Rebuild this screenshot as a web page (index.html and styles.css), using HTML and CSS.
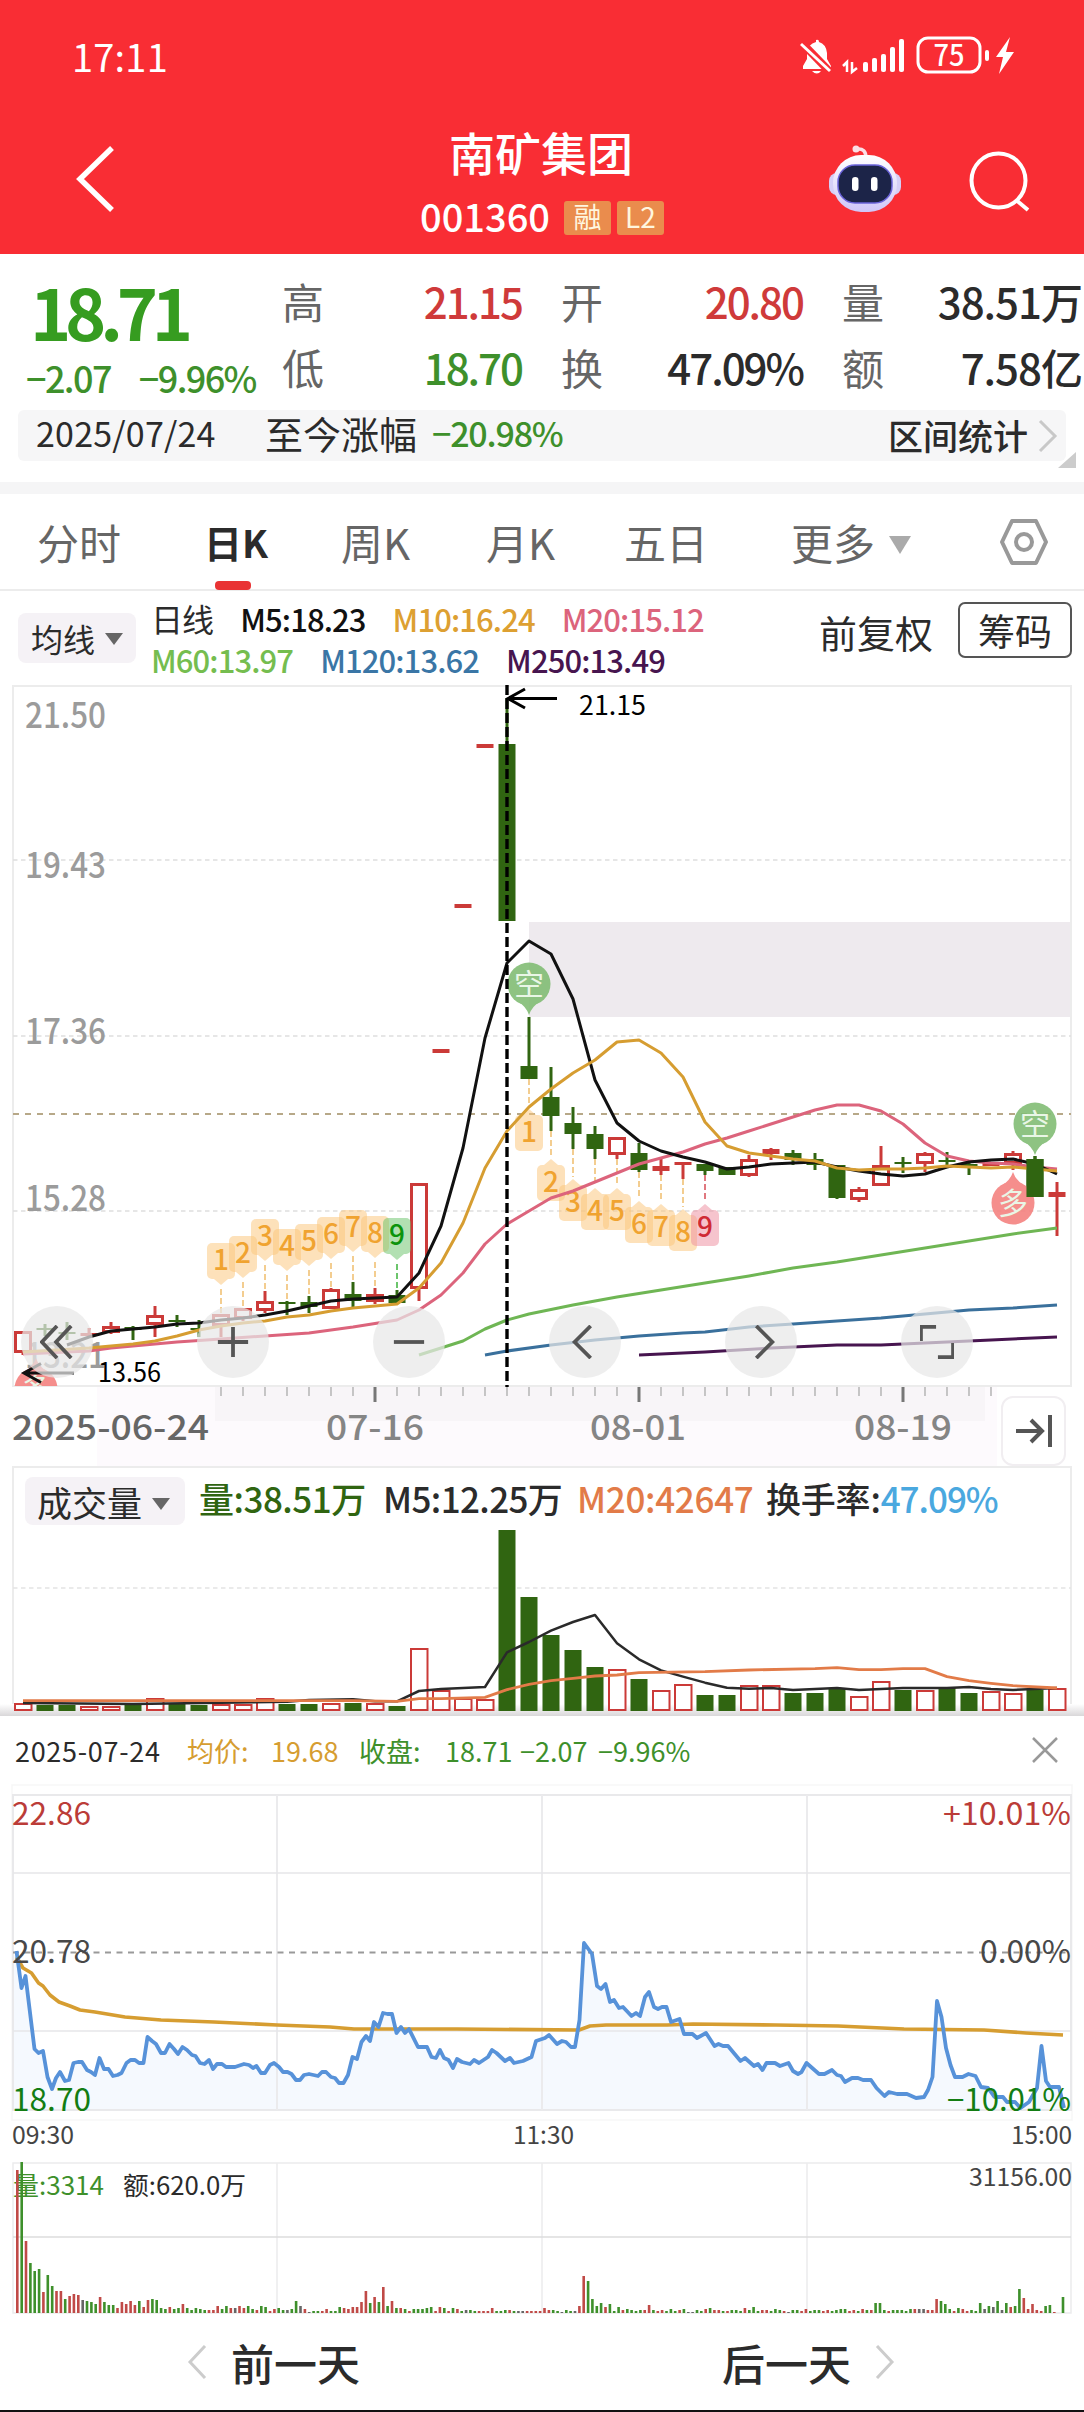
FILE: index.html
```html
<!DOCTYPE html>
<html lang="zh-CN">
<head>
    <meta charset="utf-8">
    <title>南矿集团 001360</title>
    <link rel="stylesheet" href="styles.css">
</head>
<body>
    <header class="top">
        <div class="status">
            <span class="clock">17:11</span>
            <svg class="status-icons" width="220" height="44" viewBox="797 34 220 44">
                <g fill="#fff">
                    <path d="M803 66 L807 59 V53 Q808 44 816 42 L816 40 Q819 39 819 42 Q826 44 827 53 V59 L831 66 V69 H803 Z"/>
                    <path d="M812 71 H821 Q817 76 812 71 Z"/>
                    <rect x="863" y="62" width="5" height="10" rx="2"/>
                    <rect x="872" y="58" width="5" height="14" rx="2"/>
                    <rect x="881" y="54" width="5" height="18" rx="2"/>
                    <rect x="890" y="47" width="5" height="25" rx="2"/>
                    <rect x="899" y="39" width="5" height="33" rx="2"/>
                    <rect x="985" y="50" width="4" height="11" rx="2"/>
                    <path d="M1010 37 L996 57 H1003 L999 74 L1014 52 H1006 Z"/>
                </g>
                <path d="M800 41 L831 73" stroke="#f92d34" stroke-width="8"/>
                <path d="M801 44 L830 71" stroke="#fff" stroke-width="3"/>
                <path d="M843 66 L847 62 V72 M852 62 V72 L857 68" fill="none" stroke="#fff" stroke-width="2.5"/>
                <rect x="918" y="38" width="62" height="34" rx="10" fill="none" stroke="#fff" stroke-width="3"/>
                <text x="949" y="65.500" class="battery" text-anchor="middle" textLength="31" lengthAdjust="spacingAndGlyphs">75</text>
            </svg>
        </div>
        <div class="titlebar">
            <svg class="back" width="44" height="70" viewBox="0 0 44 70"><path d="M38 4 L6 35 L38 66" fill="none" stroke="#fff" stroke-width="5.500"/></svg>
            <div class="title">
                <h1>南矿集团</h1>
                <div class="code"><span>001360</span><i>融</i><i>L2</i></div>
            </div>
            <div class="tools">
                <svg width="76" height="72" viewBox="827 143 76 72">
                    <defs>
                        <linearGradient id="shell" x1="0" y1="0" x2="0" y2="1"><stop offset="0" stop-color="#fff"/><stop offset="1" stop-color="#cfc6f8"/></linearGradient>
                    </defs>
                    <circle cx="856" cy="149" r="3.500" fill="#fbdfe6"/>
                    <path d="M857 149 Q866 148 866 158" fill="none" stroke="#fbdfe6" stroke-width="3.500"/>
                    <rect x="829" y="173" width="72" height="22" rx="8" fill="#d5cff7"/>
                    <rect x="833" y="155" width="64" height="57" rx="28" fill="url(#shell)"/>
                    <rect x="838" y="165" width="54" height="38" rx="17" fill="#1c2448" stroke="#6a63d9" stroke-width="1.500"/>
                    <rect x="852" y="177" width="6.500" height="14" rx="3.200" fill="#fff"/>
                    <rect x="871" y="177" width="6.500" height="14" rx="3.200" fill="#fff"/>
                </svg>
                <svg width="64" height="64" viewBox="967 149 64 64"><g fill="none" stroke="#fff" stroke-width="4"><circle cx="998.500" cy="180.500" r="27"/><path d="M1016 200 L1028 210"/></g></svg>
            </div>
        </div>
    </header>

    <section class="quote">
        <div class="price">
            <b>18.71</b>
            <div class="change"><span>−2.07</span><span>−9.96%</span></div>
        </div>
        <dl class="stats">
            <dt>高</dt><dd class="up">21.15</dd><dt>开</dt><dd class="up">20.80</dd><dt>量</dt><dd>38.51万</dd>
            <dt>低</dt><dd class="down">18.70</dd><dt>换</dt><dd>47.09%</dd><dt>额</dt><dd>7.58亿</dd>
        </dl>
        <div class="range">
            <span class="day">2025/07/24</span>
            <span class="since">至今涨幅</span>
            <span class="pct">−20.98%</span>
            <span class="interval">区间统计</span>
            <svg width="20" height="34" viewBox="0 0 20 34"><path d="M2 2 L17 17 L2 32" fill="none" stroke="#c8c8c8" stroke-width="3"/></svg>
        </div>
        <div class="corner"></div>
    </section>

    <nav class="tabs">
        <span>分时</span>
        <span class="active">日K</span>
        <span>周K</span>
        <span>月K</span>
        <span>五日</span>
        <span class="more">更多<i></i></span>
        <svg width="52" height="50" viewBox="0 0 52 50"><g fill="none" stroke="#999" stroke-width="4"><path d="M14 4 H38 L48 25 L38 46 H14 L4 25 Z" stroke-linejoin="round"/><circle cx="26" cy="25" r="8"/></g></svg>
    </nav>

    <section class="legend">
        <button class="pick">均线<i></i></button>
        <div class="averages">
            <div><span class="name">日线</span><span class="m5">M5:18.23</span><span class="m10">M10:16.24</span><span class="m20">M20:15.12</span></div>
            <div><span class="m60">M60:13.97</span><span class="m120">M120:13.62</span><span class="m250">M250:13.49</span></div>
        </div>
        <span class="adjust">前复权</span>
        <button class="chips">筹码</button>
    </section>

    <section class="kline">
        <svg id="kline" width="1084" height="782" viewBox="0 684 1084 782"></svg>
        <div class="controls">
            <button><svg viewBox="0 0 36 36"><path d="M18 1 L2 18 L18 35 M33 1 L17 18 L33 35"/></svg></button>
            <button><svg viewBox="0 0 36 36"><path d="M2 18 H34 M18 2 V34"/></svg></button>
            <button><svg viewBox="0 0 36 36"><path d="M2 18 H34"/></svg></button>
            <button><svg viewBox="0 0 36 36"><path d="M24 1 L7 18 L24 35"/></svg></button>
            <button><svg viewBox="0 0 36 36"><path d="M13 1 L30 18 L13 35"/></svg></button>
            <button><svg viewBox="0 0 36 36"><path d="M1 17 V2 H17 M35 19 V34 H19"/></svg></button>
        </div>
        <button class="latest"><svg width="36" height="34" viewBox="0 0 36 34"><path d="M0 17 H26 M15 6 L26 17 L15 28 M34 1 V33" fill="none" stroke="#555" stroke-width="4"/></svg></button>
    </section>

    <section class="volume">
        <svg id="volume" width="1084" height="250" viewBox="0 1466 1084 250"></svg>
        <div class="volume-head">
            <button class="pick">成交量<i></i></button>
            <span class="v0">量:38.51万</span><span class="v1">M5:12.25万</span><span class="v2">M20:42647</span><span class="v3">换手率:<em>47.09%</em></span>
        </div>
    </section>

    <section class="intraday">
        <div class="intraday-head">
            <span class="date">2025-07-24</span>
            <span class="avg">均价:</span><span class="avg">19.68</span>
            <span class="close">收盘:</span><span class="close">18.71</span><span class="close">−2.07</span><span class="close">−9.96%</span>
            <svg width="28" height="28" viewBox="0 0 28 28"><path d="M2 2 L26 26 M26 2 L2 26" stroke="#999" stroke-width="2.500"/></svg>
        </div>
        <svg id="intraday" width="1084" height="532" viewBox="0 1784 1084 532"></svg>
    </section>

    <footer class="pager">
        <span class="prev"><svg width="20" height="34" viewBox="0 0 20 34"><path d="M18 1 L3 17 L18 33" fill="none" stroke="#ccc" stroke-width="3"/></svg>前一天</span>
        <span class="next">后一天<svg width="20" height="34" viewBox="0 0 20 34"><path d="M2 1 L17 17 L2 33" fill="none" stroke="#ccc" stroke-width="3"/></svg></span>
    </footer>

    <script src="charts.js"></script>
</body>
</html>
```
FILE: charts.js
```js
const RED = '#cb3a38';
const GREEN = '#306511';
const STEP = 22;
const cx = i => 23 + i * STEP;

// [open/close top, bottom, high, low, kind]  r = hollow red, R = solid red, g = green
const candles = [
    [1331, 1353, 1331, 1355, 'r'], [1328, 1330, 1324, 1336, 'g'], [1332, 1334, 1322, 1340, 'g'], [1333, 1336, 1328, 1337, 'R'],
    [1326, 1333, 1322, 1334, 'r'], [1327, 1330, 1326, 1340, 'g'], [1315, 1325, 1306, 1337, 'r'], [1320, 1322, 1315, 1327, 'g'],
    [1328, 1330, 1320, 1337, 'g'], [1314, 1326, 1314, 1337, 'r'], [1308, 1319, 1308, 1321, 'r'], [1301, 1311, 1291, 1313, 'r'],
    [1302, 1304, 1301, 1315, 'g'], [1302, 1307, 1296, 1313, 'g'], [1289, 1309, 1288, 1309, 'r'], [1294, 1301, 1282, 1307, 'g'],
    [1294, 1302, 1288, 1304, 'r'], [1295, 1303, 1290, 1303, 'g'], [1183, 1289, 1183, 1301, 'r'], [1049, 1053, 1049, 1053, 'R'],
    [904, 908, 904, 908, 'R'], [744, 748, 744, 748, 'R'], [744, 921, 698, 921, 'g'], [1066, 1079, 1017, 1079, 'g'],
    [1097, 1116, 1067, 1131, 'g'], [1123, 1134, 1107, 1149, 'g'], [1134, 1149, 1126, 1159, 'g'], [1137, 1155, 1137, 1159, 'r'],
    [1153, 1170, 1143, 1172, 'g'], [1166, 1171, 1159, 1175, 'R'], [1162, 1165, 1162, 1179, 'R'], [1164, 1171, 1164, 1175, 'g'],
    [1167, 1175, 1167, 1175, 'g'], [1159, 1176, 1155, 1177, 'r'], [1149, 1154, 1148, 1160, 'R'], [1153, 1160, 1150, 1165, 'g'],
    [1159, 1165, 1153, 1170, 'g'], [1165, 1198, 1165, 1199, 'g'], [1189, 1200, 1187, 1202, 'r'], [1165, 1186, 1146, 1186, 'r'],
    [1162, 1164, 1157, 1173, 'g'], [1153, 1164, 1152, 1172, 'r'], [1160, 1162, 1152, 1165, 'g'], [1164, 1166, 1163, 1175, 'g'],
    [1163, 1166, 1163, 1166, 'R'], [1153, 1164, 1151, 1170, 'r'], [1159, 1197, 1156, 1197, 'g'], [1192, 1197, 1182, 1236, 'R']
];

// moving averages: pairs of bar index, y
const averages = [
    ['#dc647c', '0,1354 3,1351 4,1348 6,1344 7,1342 9,1339 11,1336 13,1333 15,1327 17,1320 18,1310 19,1295 20,1273 21,1244 22,1224 23,1211 24,1198 25,1191 26,1182 27,1173 28,1164 29,1158 30,1152 31,1144 32,1138 33,1131 34,1124 35,1117 36,1110 37,1105 38,1105 39,1111 40,1124 41,1143 42,1156 43,1161 44,1163 45,1164 46,1167 47,1169'],
    ['#6fb654', '18,1355 19,1348 20,1341 21,1329 22,1320 23,1314 25,1305 27,1297 29,1290 31,1283 33,1276 35,1268 37,1262 39,1255 41,1248 43,1241 45,1234 47,1228'],
    ['#3a709c', '21,1355 22,1351 24,1345 26,1340 28,1336 30,1333 31,1332 33,1327 35,1324 37,1321 39,1318 41,1314 43,1310 45,1308 47,1305'],
    ['#47154f', '28,1355 31,1352 34,1348 37,1345 39,1345 41,1343 44,1340 47,1337'],
    ['#111', '2,1345 3,1337 4,1331 5,1329 6,1327 7,1324 8,1323 9,1320 10,1318 11,1315 12,1311 13,1306 14,1301 15,1299 16,1298 17,1297 18,1273 19,1226 20,1148 21,1038 22,963 23,941 24,954 25,999 26,1080 27,1123 28,1141 29,1151 30,1157 31,1162 32,1169 33,1167 34,1164 35,1163 36,1162 37,1167 38,1171 39,1174 40,1176 41,1174 42,1167 43,1162 44,1160 45,1159 46,1164 47,1174'],
    ['#d69d31', '0,1352 3,1348 4,1346 5,1344 6,1341 7,1336 8,1330 9,1326 10,1323 11,1321 12,1317 13,1315 14,1311 15,1308 16,1306 17,1304 18,1288 19,1263 20,1223 21,1168 22,1131 23,1107 24,1089 25,1073 26,1060 27,1042 28,1040 29,1053 30,1077 31,1122 32,1146 33,1153 34,1156 35,1159 36,1161 37,1168 38,1170 39,1169 40,1169 41,1168 42,1166 43,1167 44,1168 45,1167 46,1169 47,1171']
];

const line = (x1, y1, x2, y2, color, w = 2, extra = '') =>
    `<line x1="${x1}" y1="${y1}" x2="${x2}" y2="${y2}" stroke="${color}" stroke-width="${w}" ${extra}/>`;
const rect = (x, y, w, h, fill, extra = '') =>
    `<rect x="${x}" y="${y}" width="${w}" height="${h}" fill="${fill}" ${extra}/>`;
const text = (x, y, str, size, color, len, extra = '') =>
    `<text x="${x}" y="${y}" font-size="${size}" fill="${color}" ${len ? `textLength="${len}" lengthAdjust="spacingAndGlyphs"` : ''} ${extra}>${str}</text>`;
const poly = (points, color, w = 3, extra = '') =>
    `<polyline points="${points}" fill="none" stroke="${color}" stroke-width="${w}" stroke-linejoin="round" ${extra}/>`;
const indexed = list => list.split(' ').map(p => {
    const [i, y] = p.split(',');
    return cx(+i) + ',' + y;
}).join(' ');

function candle([top, bottom, high, low, kind], i) {
    const x = cx(i);
    const color = kind === 'g' ? GREEN : RED;
    let s = '';
    if (high < top) s += line(x, high, x, top, color, 3);
    if (low > bottom) s += line(x, bottom, x, low, color, 3);
    if (kind === 'r') s += rect(x - 7.5, top + 1.5, 15, Math.max(bottom - top - 3, 2), '#fff', `stroke="${color}" stroke-width="3"`);
    else s += rect(x - 8.5, top, 17, bottom - top, color);
    return s;
}

function flag(i, top, n, below, far, last) {
    const x = cx(i);
    const fill = last ? (below ? '#ee8fa0' : '#6cc56c') : '#fcc77c';
    const ink = last ? (below ? '#d02a35' : '#0c930c') : '#f0a330';
    const tip = below ? `M${x - 7} ${top} L${x} ${top - 6} L${x + 7} ${top} Z` : `M${x - 7} ${top + 36} L${x} ${top + 42} L${x + 7} ${top + 36} Z`;
    return line(x, below ? far : top + 46, x, below ? top - 8 : far, last ? (below ? '#e0787f' : '#6cc56c') : '#f3cd90', 2, 'stroke-dasharray="6 3"') +
        `<g fill="${fill}" opacity=".52">${rect(x - 14, top, 28, 36, fill, 'rx="5"')}<path d="${tip}"/></g>` +
        text(x, top + 27, n, 28, ink, 0, 'text-anchor="middle" font-weight="500"');
}

function pin(x, y, label, color, up) {
    const d = up ? -1 : 1;
    return `<g opacity=".9"><circle cx="${x}" cy="${y}" r="21.500" fill="${color}"/><path d="M${x - 12} ${y + 17 * d} Q${x - 3} ${y + 22 * d} ${x} ${y + 31 * d} Q${x + 3} ${y + 22 * d} ${x + 12} ${y + 17 * d} Z" fill="${color}"/></g>` +
        text(x, y + 11, label, 30, '#e9f6e6', 0, 'text-anchor="middle"');
}

function drawKline() {
    let s = rect(97, 1387, 900, 79, '#fdfafd') + rect(215, 1387, 770, 34, '#f8f5f8');
    s += rect(13, 686, 1058, 700, '#fff', 'stroke="#ececec" stroke-width="2"');
    s += rect(529, 922, 541, 95, '#eeeaee');
    [860, 1036, 1211].forEach(y => s += line(13, y, 1071, y, '#dedede', 1.5, 'stroke-dasharray="4.500 3.500"'));
    s += line(13, 1114, 1071, 1114, '#b7a888', 2, 'stroke-dasharray="6 6"');
    [['21.50', 728], ['19.43', 878], ['17.36', 1044], ['15.28', 1211], ['13.21', 1368]].forEach(([t, y]) =>
        s += text(25, y, t, 35, '#9b9b9b', 81, 'font-weight="500"'));
    s += '<clipPath id="plot"><rect x="13" y="684" width="1058" height="702"/></clipPath>';
    s += `<g clip-path="url(#plot)">${pin(36, 1389, '多', '#f58280', true)}</g>`;
    s += candles.map(candle).join('');
    [1243, 1236, 1219, 1229, 1224, 1217, 1210, 1216, 1218].forEach((y, k) => s += flag(9 + k, y, k + 1, false, candles[9 + k][2], k === 8));
    [1115, 1165, 1185, 1194, 1194, 1207, 1210, 1215, 1210].forEach((y, k) => s += flag(23 + k, y, k + 1, true, candles[23 + k][3], k === 8));
    averages.forEach(([color, pts]) => s += poly(indexed(pts), color, 3));
    s += pin(529, 984, '空', '#82bd75') + pin(1035, 1124, '空', '#82bd75') + pin(1013, 1203, '多', '#f58280', true);
    s += candle(candles[46], 46);
    s += line(507, 685, 507, 1387, '#000', 3.4, 'stroke-dasharray="10 4"');
    s += '<path d="M557 698.500 H508 M525 689 L508 698.500 L525 708" fill="none" stroke="#000" stroke-width="3"/>';
    s += text(579, 715, '21.15', 27, '#000', 67);
    s += '<path d="M74 1373 H24 M41 1363.500 L24 1373 L41 1382.500" fill="none" stroke="#111" stroke-width="3"/>';
    s += text(98, 1382, '13.56', 27, '#000', 63);
    for (let i = 9; i < 45; i++) {
        const big = i % 12 === 4;
        s += line(cx(i), 1387, cx(i), big ? 1402 : 1396, big ? '#777' : '#aaa', big ? 3 : 1.3);
    }
    [[12, '2025-06-24', 197, '#666'], [326, '07-16', 98, '#858585'], [590, '08-01', 96, '#858585'], [854, '08-19', 98, '#858585']].forEach(([x, t, len, c]) =>
        s += text(x, 1440, t, 34, c, len, 'font-weight="500"'));
    document.getElementById('kline').innerHTML = s;
}

const volumes = [8, 6, 6, 5, 5, 6, 13, 7, 6, 7, 7, 13, 7, 7, 8, 8, 8, 5, 63, 21, 13, 12, 181, 114, 76, 61, 44, 42, 32, 21, 27, 16, 16, 26, 26, 18, 18, 22, 15, 30, 21, 21, 24, 18, 20, 18, 21, 23];
const volumeColors = 'rggrrgrggrrrggrgrgrrrrgggggrgrrggrrgggrrgrggrrgr';

function drawVolume() {
    const at = list => list.map(([i, v]) => cx(i) + ',' + (1460 + v / 3)).join(' ');
    let s = line(13, 1467, 1071, 1467, '#ececec', 2) + line(13, 1466, 13, 1711, '#ececec') + line(1071, 1466, 1071, 1711, '#ececec');
    s += '<linearGradient id="shade" x1="0" y1="0" x2="0" y2="1"><stop offset="0" stop-color="#fff"/><stop offset="1" stop-color="#d9d7d9"/></linearGradient>';
    s += rect(0, 1704, 1084, 12, 'url(#shade)');
    s += line(13, 1588, 1071, 1588, '#e4e4e4', 1.5, 'stroke-dasharray="4.500 3.500"');
    volumes.forEach((h, i) => {
        const y = 1711 - h;
        s += volumeColors[i] === 'g' ? rect(cx(i) - 8.5, y, 17, h, GREEN)
            : rect(cx(i) - 8, y + 1, 16.5, Math.max(h - 2, 2), '#fff', `stroke="${RED}" stroke-width="2"`);
    });
    s += poly(at([[0, 729], [5, 732], [9, 728], [12, 725], [13, 720], [15, 718], [16, 724], [17, 724], [18, 693], [19, 687], [20, 684], [21, 681], [22, 577], [23, 546], [24, 512], [25, 486], [26, 465], [27, 550], [28, 598], [29, 631], [30, 650], [31, 668], [32, 683], [33, 686], [34, 684], [35, 690], [37, 684], [38, 690], [40, 684], [42, 684], [43, 681], [44, 687], [45, 690], [47, 684]]), '#2a2a2a', 2.5);
    s += poly(at([[0, 722], [15, 722], [17, 724], [18, 716], [19, 716], [21, 712], [22, 689], [23, 673], [24, 662], [25, 655], [26, 648], [27, 645], [28, 638], [31, 635], [33, 630], [36, 626], [37, 623], [38, 629], [39, 629], [40, 626], [41, 626], [42, 650], [43, 662], [44, 670], [45, 677], [47, 684]]), '#e27b48', 2.8);
    document.getElementById('volume').innerHTML = s;
}

const price = '16.5,1951 21.5,1988 25.5,1976 34.5,2049 38.5,2053 43,2051 47.5,2077 52,2089 56,2078 60,2072 65,2081 69,2080 73.5,2063 78,2062 82,2062 87,2070 91,2072 95,2075 99.5,2058 104,2069 108.5,2069 113,2076 117.5,2075 121.5,2073 126.5,2063 130.5,2060 135,2060 139,2063 143.5,2063 147.5,2037 152,2041 156,2044 161,2053 165,2053 169.5,2044 174,2049 178,2054 182.5,2047 187,2050 192,2055 195.5,2056 200,2063 204.5,2064 209,2060 213,2069 217,2064 222,2064 226,2067 235,2067 244,2064 249,2065 253,2068 256.5,2066 261,2073 265,2073 270,2065 274,2063 279,2067 283,2072 287.5,2072 291.5,2074 296,2080 300,2080 304,2075 309,2074 318,2076 322,2072 326,2072 331,2077 335,2078 339,2083 343.5,2083 348,2075 352.5,2057 357,2059 361.5,2042 366,2036 370,2041 374,2022 378.5,2027 383,2013 387.5,2014 392,2014 396.5,2033 401,2027 405,2033 409,2029 418,2047 427,2047 431.5,2057 436,2058 440,2050 444,2058 448.5,2060 453,2068 457,2059 462,2062 470,2064 474,2060 479,2063 488,2057 492,2050 496.5,2053 505,2061 510,2058 514,2063 523,2061 531.5,2057 536,2041 545,2038 549,2035 557,2044 562,2041 566,2042 571,2047 575,2047 579.5,2020 584,1943 592,1954 597,1986 601,1989 605.5,1984 610,2002 614,2000 619,2008 623,2007 631.5,2016 636,2013 640,2016 645,1997 649,1992 654,2007 658,2009 662,2007 666.5,2007 671,2022 679.5,2019 684,2034 692.5,2034 697,2038 706,2033 714.5,2046 718.5,2044 723,2046 728,2046 740.5,2061 745,2058 754,2066 758,2064 762.5,2070 766.5,2063 775,2063 780,2066 788.5,2063 793,2071 798,2074 801.5,2072 806.5,2063 819,2074 824.5,2074 832,2070 837,2075 841,2076 845,2082 852,2078 858,2078 863,2080 871,2080 876.5,2088 884.5,2096 889,2092 897,2094 907,2094 916,2098 924,2097 928,2090 932.5,2077 937,2001 941.5,2017 946,2048 950.5,2065 955,2077 962.5,2077 968.5,2074 975.5,2076 981,2087 988,2088 994.5,2097 1003,2097 1007,2102 1015,2102 1020.5,2108 1029,2102 1037,2088 1041.5,2046 1046,2081 1050,2087 1059,2087 1064,2108';
const mean = '16.5,1957 23,1968 31.5,1973 38.5,1983 43,1986 50,1995 59,2002 70,2006 80,2010 95,2012 125,2017 161,2020 214,2022 277,2025 330,2027 354,2029 457,2029 579,2030 590,2026 606,2025 667,2025 693,2024 776,2025 838,2026 904,2029 984,2030 1026,2033 1063,2035';

// one entry per minute: colour + height
const minutes = ('r143 g151 r72 g50 g42 g44 r21 g38 g27 r22 r22 g14 r17 r19 r18 k13 g12 g11 g9 r16 g11 g8 g8 r5 r11 r9 r12 r8 g12 r6 ' +
    'r13 g14 g13 g5 g4 r6 g4 g5 r9 g5 g3 g5 g4 g3 r3 r3 r7 g4 g7 r5 k5 r7 r5 g7 g4 r3 g7 g6 r2 r4 ' +
    'g5 g3 k3 g4 g12 k7 r4 k1 g2 g2 r2 r4 g2 g2 g6 r5 r4 r6 r6 r11 r22 g10 r16 g11 r26 g7 r12 g5 r5 g4 ' +
    'r2 g4 g4 g4 g5 g6 r2 r6 g5 r2 g5 r4 g2 k3 g3 g2 r2 r2 r2 r5 g2 g2 g3 r3 g2 k2 k2 r2 r2 r2 ' +
    'r2 r5 r3 g3 g2 k1 g3 g2 k2 r7 r37 g32 g14 g7 g10 r6 g9 g2 g6 r3 g4 g3 g2 g3 r3 r8 g3 r2 r3 g2 ' +
    'g4 g2 r3 g4 k1 k1 g3 g2 r4 g5 r3 r3 g2 r2 g3 g3 g2 r5 g3 g6 g2 r3 r3 g2 g4 g3 r2 k1 g3 g3 ' +
    'r2 r4 g2 g3 g3 r2 r3 g2 g3 g4 g4 r2 r3 g2 r4 g3 r3 g10 g10 g3 r2 g3 g3 g3 g2 g4 r4 k4 k4 r3 ' +
    'r3 r14 g12 g9 g4 r2 g5 r4 r2 g3 g2 g10 k4 g7 k6 g12 k3 g10 r6 g7 g24 r15 r4 r9 r3 r2 g7 g8 r1 k0 g16').split(' ');

function drawIntraday() {
    let s = '';
    s += rect(12, 1785, 1060, 335, '#fff', 'stroke="#f7f7f7" stroke-width="1.500"');
    s += `<path d="M${price.split(' ').join(' L')} V2110 H13 V1960 Z" fill="#f5f9fe"/>`;
    s += rect(13, 1795, 1058, 315, 'none', 'stroke="#e9e9eb" stroke-width="2"');
    [277, 542, 807].forEach(x => s += line(x, 1795, x, 2110, '#ebebed') + line(x, 2163, x, 2313, '#ebebed', 1.5));
    [1873, 2031].forEach(y => s += line(13, y, 1071, y, '#e6e6e8', 1.5));
    s += line(13, 1952.5, 1071, 1952.5, '#999', 2, 'stroke-dasharray="6 5.500"');
    s += poly(mean, '#d69d31', 3.6) + poly(price, '#5792d9', 3.8);
    [['22.86', 1825, '#bb3c38'], ['20.78', 1963, '#484848'], ['18.70', 2111, '#137d13']].forEach(([t, y, c]) => s += text(12, y, t, 31, c, 79));
    [['+10.01%', 1825, '#bb3c38', 128], ['0.00%', 1963, '#484848', 91], ['−10.01%', 2111, '#137d13', 124]].forEach(([t, y, c, len]) =>
        s += text(1071 - len, y, t, 31, c, len));
    s += text(12, 2144, '09:30', 24.5, '#444', 62) + text(513, 2144, '11:30', 24.5, '#444', 61) + text(1011, 2144, '15:00', 24.5, '#444', 61);

    s += rect(13, 2163, 1058, 150, 'none', 'stroke="#ebebed" stroke-width="1.500"') + line(13, 2237, 1071, 2237, '#dcdcdc', 1.5);
    s += text(969, 2186, '31156.00', 24.5, '#444', 103);
    s += text(13, 2195, '量:3314', 25, '#3e902b', 91) + text(123, 2195, '额:620.0万', 25, '#2b2b2b', 123);
    const ink = { r: '#c04a47', g: '#3e902b', k: '#666' };
    minutes.forEach((m, i) => {
        const h = +m.slice(1);
        s += rect((16 + i * 4.357).toFixed(1), 2313 - h, 2.6, h, ink[m[0]]);
    });
    document.getElementById('intraday').innerHTML = s;
}

drawKline();
drawVolume();
drawIntraday();
```
FILE: styles.css
```css
* {
    box-sizing: border-box;
}

body {
    margin: 0;
    width: 1084px;
    height: 2412px;
    overflow: hidden;
    background: #fff;
    color: #2b2b2b;
    font-family: "Noto Sans CJK SC", sans-serif;
    line-height: 1;
}

button {
    margin: 0;
    padding: 0;
    border: none;
    font: inherit;
    color: inherit;
}

svg {
    display: block;
}

i, em {
    font-style: normal;
}

/* header */
.top {
    height: 254px;
    background: #f92d34;
    color: #fff;
}

.status {
    display: flex;
    justify-content: space-between;
    padding: 34px 67px 0 72px;
    height: 122px;
}

.clock {
    margin-top: 3px;
    font-size: 38px;
    letter-spacing: 0.2px;
}

.battery {
    font-size: 29px;
    font-weight: 500;
    fill: #fff;
}

.titlebar {
    display: grid;
    grid-template-columns: 72px 277px 386px 1fr;
    height: 132px;
}

.back {
    grid-column: 2;
    margin: 22px 0 0 2px;
}

.title {
    width: 386px;
    text-align: center;
}

.title h1 {
    margin: 6px 0 0 -2px;
    font-size: 46px;
    font-weight: 500;
}

.code {
    display: flex;
    justify-content: center;
    align-items: center;
    margin-top: 22px;
    height: 44px;
    gap: 6px;
}

.code span {
    margin: -4px 8px 0 0;
    font-size: 38px;
    font-weight: 500;
}

.code i {
    width: 47px;
    height: 34px;
    border-radius: 3px;
    background: #ea8c4d;
    color: #fff6df;
    font-size: 28px;
    line-height: 31px;
}

.tools {
    display: flex;
    gap: 64px;
    align-items: flex-start;
    padding: 21px 0 0 92px;
}

.tools svg + svg {
    margin-top: 6px;
}

/* quote */
.quote {
    display: grid;
    grid-template-columns: 282px 802px;
    grid-template-rows: 156px 51px;
    position: relative;
    height: 240px;
    border-bottom: 12px solid #f5f5f6;
}

.price {
    padding: 22px 0 0 26px;
    color: #369c20;
}

.price b {
    display: block;
    margin-left: 4px;
    font-size: 70px;
    font-weight: 700;
    letter-spacing: -6.2px;
}

.change {
    display: flex;
    gap: 28px;
    margin-top: 13px;
    color: #3e902b;
    font-size: 36px;
    font-weight: 500;
    letter-spacing: -1.6px;
}

.stats {
    display: grid;
    grid-template-columns: 41px 199px 83px 198px 83px 196px;
    grid-template-rows: 66px 66px;
    align-items: center;
    margin: 14px 0 0;
    font-size: 42px;
    font-weight: 500;
    letter-spacing: -2px;
}

.stats dt {
    color: #666;
    font-size: 42px;
    font-weight: 400;
}

.stats dt:not(:nth-of-type(3n + 1)) {
    padding-left: 39px;
}

.stats dd {
    margin: 0;
    text-align: right;
    white-space: nowrap;
}

.stats dd:nth-of-type(3n) {
    letter-spacing: -1px;
}

.up {
    color: #cf3a3a;
}

.down {
    color: #3e902b;
}

.range {
    grid-column: 1 / 3;
    display: flex;
    align-items: center;
    margin: 0 18px;
    padding: 0 8px 0 18px;
    border-radius: 6px;
    background: #f6f6f7;
    font-size: 34px;
    white-space: nowrap;
}

.range span {
    margin-top: -5px;
}

.day {
    width: 229px;
    letter-spacing: 0.2px;
}

.since {
    width: 167px;
    font-size: 38px;
}

.pct {
    color: #3e902b;
    font-weight: 500;
    letter-spacing: -1.2px;
}

.range .interval {
    margin: -3px 10px 0 auto;
    font-size: 35px;
    font-weight: 500;
}

.corner {
    position: absolute;
    right: 8px;
    bottom: 14px;
    border: solid transparent;
    border-width: 0 0 16px 18px;
    border-bottom-color: #ccc;
}

/* tabs */
.tabs {
    display: grid;
    grid-template-columns: 167px 137px 145px 138px 167px 207px 60px;
    align-items: center;
    height: 97px;
    padding-left: 37px;
    border-bottom: 2px solid #ececec;
    color: #666;
    font-size: 42px;
    line-height: 86px;
}

.tabs .active {
    position: relative;
    color: #2b2b2b;
    font-size: 38px;
    font-weight: 700;
}

.tabs .active::after {
    content: "";
    position: absolute;
    left: 11px;
    bottom: -5px;
    width: 36px;
    height: 9px;
    border-radius: 4px;
    background: #e93334;
}

.more i, .pick i {
    display: inline-block;
    margin-left: 14px;
    border: 11px solid transparent;
    border-top: 18px solid #aaa;
    border-bottom: 0;
    vertical-align: 6px;
}

.pick i {
    margin-left: 10px;
    border-width: 12px 9px 0;
    border-top-color: #666;
    vertical-align: 7px;
}

/* moving average legend */
.legend {
    display: flex;
    height: 93px;
    padding-left: 18px;
}

.pick {
    border-radius: 8px;
    background: #f5f2f6;
    white-space: nowrap;
}

.legend .pick {
    width: 118px;
    height: 50px;
    margin-top: 22px;
    font-size: 32px;
    line-height: 44px;
}

.averages {
    width: 668px;
    margin: 7px 0 0 15px;
    font-size: 31px;
    font-weight: 500;
    line-height: 41px;
    letter-spacing: -0.9px;
}

.averages div {
    display: flex;
    gap: 27px;
}

.averages .name {
    font-size: 32px;
    font-weight: 400;
}

.m5 { color: #111; }
.m10 { color: #dda032; }
.m20 { color: #dc647c; }
.m60 { color: #75bd4f; }
.m120 { color: #3a76a6; }
.m250 { color: #47154f; }

.adjust {
    width: 139px;
    font-size: 38px;
    line-height: 82px;
}

.chips {
    width: 114px;
    height: 56px;
    margin-top: 11px;
    border: 2px solid #555;
    border-radius: 7px;
    background: #fff;
    font-size: 37px;
    line-height: 46px;
}

/* charts */
.kline {
    position: relative;
    height: 782px;
}

.controls {
    position: absolute;
    left: 21px;
    top: 622px;
    display: flex;
    gap: 104px;
}

.controls button {
    display: grid;
    place-items: center;
    width: 72px;
    height: 72px;
    border-radius: 50%;
    background: rgba(232, 232, 232, 0.72);
}

.controls svg {
    width: 34px;
    height: 34px;
    fill: none;
    stroke: #555;
    stroke-width: 4;
}

.latest {
    position: absolute;
    right: 18px;
    top: 712px;
    display: grid;
    place-items: center;
    width: 65px;
    height: 70px;
    border: 2px solid #f1eef1;
    border-radius: 12px;
    background: #fff;
}

.volume {
    display: grid;
    height: 250px;
}

.volume > * {
    grid-area: 1 / 1;
}

.volume-head {
    display: flex;
    padding: 11px 0 0 25px;
    font-size: 35px;
    line-height: 42px;
    white-space: nowrap;
}

.volume-head .pick {
    width: 160px;
    height: 48px;
    margin-right: 14px;
    padding-right: 3px;
    line-height: 41px;
}

.volume-head .v0 { width: 184px; color: #306511; letter-spacing: -0.5px; }
.volume-head .v1 { width: 194px; letter-spacing: -0.6px; }
.volume-head .v2 { width: 189px; color: #e27b48; letter-spacing: -0.3px; }
.volume-head .v3 { letter-spacing: -0.2px; }
.volume-head em { color: #4aa8df; letter-spacing: -1px; }

.volume-head span {
    font-weight: 500;
}

/* intraday sheet */
.intraday-head {
    display: grid;
    grid-template-columns: 172px 84px 88px 86px 75px 78px 433px 28px;
    align-items: center;
    height: 68px;
    padding-left: 15px;
    font-size: 27px;
    line-height: 63px;
}

.date { letter-spacing: 0.7px; }
.avg { color: #d69d31; }
.close { color: #3e902b; }

.pager {
    display: flex;
    align-items: center;
    height: 96px;
    padding: 0 189px 2px 187px;
    border-bottom: 2px solid #111;
    justify-content: space-between;
    font-size: 43px;
    font-weight: 500;
}

.pager span {
    display: flex;
    align-items: center;
    gap: 24px;
    line-height: 84px;
}
```
